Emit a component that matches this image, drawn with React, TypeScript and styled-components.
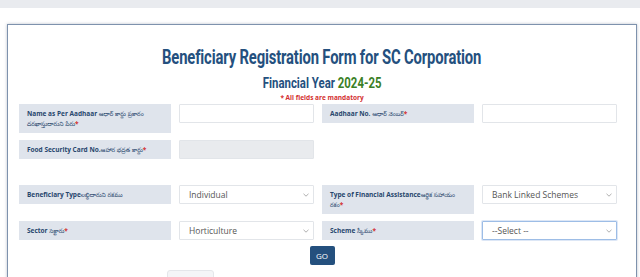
import React from 'react';
import styled, { createGlobalStyle } from 'styled-components';

const GlobalStyle = createGlobalStyle`
  body {
    margin: 0;
    background: #ffffff;
    font-family: "Open Sans", "Noto Sans", sans-serif;
  }
`;

type Field = {
  label: string;
  telugu: string;
  required?: boolean;
  kind: 'input' | 'disabled' | 'select';
  value?: string;
  focused?: boolean;
};

const rowsTop: Field[][] = [
  [
    { label: 'Name as Per Aadhaar ', telugu: 'ఆధార్ కార్డు ప్రకారం దరఖాస్తుదారుని పేరు', required: true, kind: 'input' },
    { label: 'Aadhaar No. ', telugu: 'ఆధార్ నెంబర్', required: true, kind: 'input' },
  ],
  [{ label: 'Food Security Card No.', telugu: 'ఆహార భద్రత కార్డు', required: true, kind: 'disabled' }],
];

const rowsBottom: Field[][] = [
  [
    { label: 'Beneficiary Type', telugu: 'లబ్ధిదారుని రకము', kind: 'select', value: 'Individual' },
    { label: 'Type of Financial Assistance', telugu: 'ఆర్థిక సహాయం రకం', required: true, kind: 'select', value: 'Bank Linked Schemes' },
  ],
  [
    { label: 'Sector ', telugu: 'సెక్టారు', required: true, kind: 'select', value: 'Horticulture' },
    { label: 'Scheme ', telugu: 'స్కీము', required: true, kind: 'select', value: '--Select --', focused: true },
  ],
];

const Chevron = () => (
  <svg width="6" height="4" viewBox="0 0 6 4">
    <path d="M0.5 0.8 L3 3.2 L5.5 0.8" fill="none" stroke="#9a9a9a" strokeWidth="0.8" />
  </svg>
);

const renderField = (f: Field, i: number) => (
  <React.Fragment key={i}>
    <Label>
      {f.label}
      <Telugu>{f.telugu}</Telugu>
      {f.required && <Star>*</Star>}
    </Label>
    {f.kind === 'select' ? (
      <Select focused={f.focused}>
        <span>{f.value}</span>
        <Chevron />
      </Select>
    ) : (
      <Input disabled={f.kind === 'disabled'} />
    )}
  </React.Fragment>
);

const App: React.FC = () => {
  return (
    <>
      <GlobalStyle />
      <TopBar />
      <Card>
        <Heading>
          <Title>Beneficiary Registration Form for SC Corporation</Title>
        </Heading>
        <Heading>
          <SubTitle>
            Financial Year <Year>2024-25</Year>
          </SubTitle>
        </Heading>
        <Mandatory>* All fields are mandatory</Mandatory>
        <Section>
          {rowsTop.map((row, r) => (
            <Row key={r}>{row.map(renderField)}</Row>
          ))}
        </Section>
        <Section spaced>
          {rowsBottom.map((row, r) => (
            <Row key={r}>{row.map(renderField)}</Row>
          ))}
        </Section>
        <ButtonBar>
          <GoButton>GO</GoButton>
        </ButtonBar>
        <NextRow>
          <Tab />
        </NextRow>
      </Card>
    </>
  );
};

const TopBar = styled.div`
  height: 8px;
  background: #e9ebef;
`;

const Card = styled.div`
  margin: 16px 3px 0 7px;
  border: 1px solid #7e92ad;
  box-shadow: 0 0 3px rgba(60, 80, 110, 0.35);
  padding: 21px 11px 0 11px;
  height: 260px;
  box-sizing: border-box;
`;

const Heading = styled.div`
  display: flex;
  justify-content: center;
`;

const Title = styled.h1`
  margin: 0;
  white-space: nowrap;
  font-family: "Roboto", "Liberation Sans", sans-serif;
  font-weight: 700;
  font-size: 20px;
  line-height: 22px;
  letter-spacing: -0.2px;
  color: #24507e;
  transform: scaleX(0.74);
`;

const SubTitle = styled.h2`
  margin: 7px 0 0 0;
  white-space: nowrap;
  font-family: "Roboto", "Liberation Sans", sans-serif;
  font-weight: 700;
  font-size: 15px;
  line-height: 16px;
  color: #24507e;
  transform: scaleX(0.76);
`;

const Year = styled.span`
  color: #3b7f26;
`;

const Mandatory = styled.div`
  margin-top: 3px;
  text-align: center;
  font-size: 6.5px;
  font-weight: 700;
  line-height: 8px;
  color: #d32f2f;
`;

const Section = styled.div<{ spaced?: boolean }>`
  margin-top: ${(p) => (p.spaced ? '26px' : '2px')};
  display: flex;
  flex-direction: column;
  gap: 7px;
`;

const Row = styled.div`
  display: grid;
  grid-template-columns: 152fr 135fr 152fr 135fr;
  column-gap: 8px;
  align-items: start;
  padding-right: 8px;
`;

const Label = styled.div`
  background: #dfe4ec;
  color: #27466d;
  font-size: 6.5px;
  font-weight: 700;
  line-height: 10px;
  padding: 5px 8px 4px 8px;
  min-height: 19px;
  box-sizing: border-box;
`;

const Telugu = styled.span`
  font-family: "Noto Sans Telugu", "Noto Sans", sans-serif;
  font-weight: 400;
  font-size: 6px;
  line-height: 1;
`;

const Star = styled.span`
  color: #d32f2f;
`;

const Input = styled.div<{ disabled?: boolean }>`
  height: 19px;
  box-sizing: border-box;
  border: 1px solid #e2e5e9;
  border-radius: 1px;
  background: ${(p) => (p.disabled ? '#e9ebee' : '#ffffff')};
`;

const Select = styled.div<{ focused?: boolean }>`
  height: 19px;
  box-sizing: border-box;
  border: 1px solid ${(p) => (p.focused ? '#9dbde6' : '#e2e5e9')};
  box-shadow: ${(p) => (p.focused ? '0 0 0 1px rgba(120, 160, 220, 0.25)' : 'none')};
  border-radius: 1px;
  background: #ffffff;
  display: flex;
  align-items: center;
  justify-content: space-between;
  padding: 0 4px 0 9px;
  font-size: 8.5px;
  color: #555;
`;

const ButtonBar = styled.div`
  display: flex;
  justify-content: center;
  margin-top: 6px;
`;

const GoButton = styled.button`
  width: 25px;
  height: 19px;
  padding: 0;
  border: none;
  border-radius: 2px;
  background: #24507e;
  color: #ffffff;
  font-family: "Open Sans", sans-serif;
  font-size: 8px;
`;

const NextRow = styled.div`
  display: grid;
  grid-template-columns: 152fr 135fr 152fr 135fr;
  column-gap: 8px;
  margin-top: 5px;
  padding-right: 8px;
`;

const Tab = styled.div`
  grid-column: 2;
  width: 45px;
  height: 10px;
  margin-left: -12px;
  border: 1px solid #e4e6ea;
  border-radius: 3px;
  background: #f4f5f7;
`;

export default App;
